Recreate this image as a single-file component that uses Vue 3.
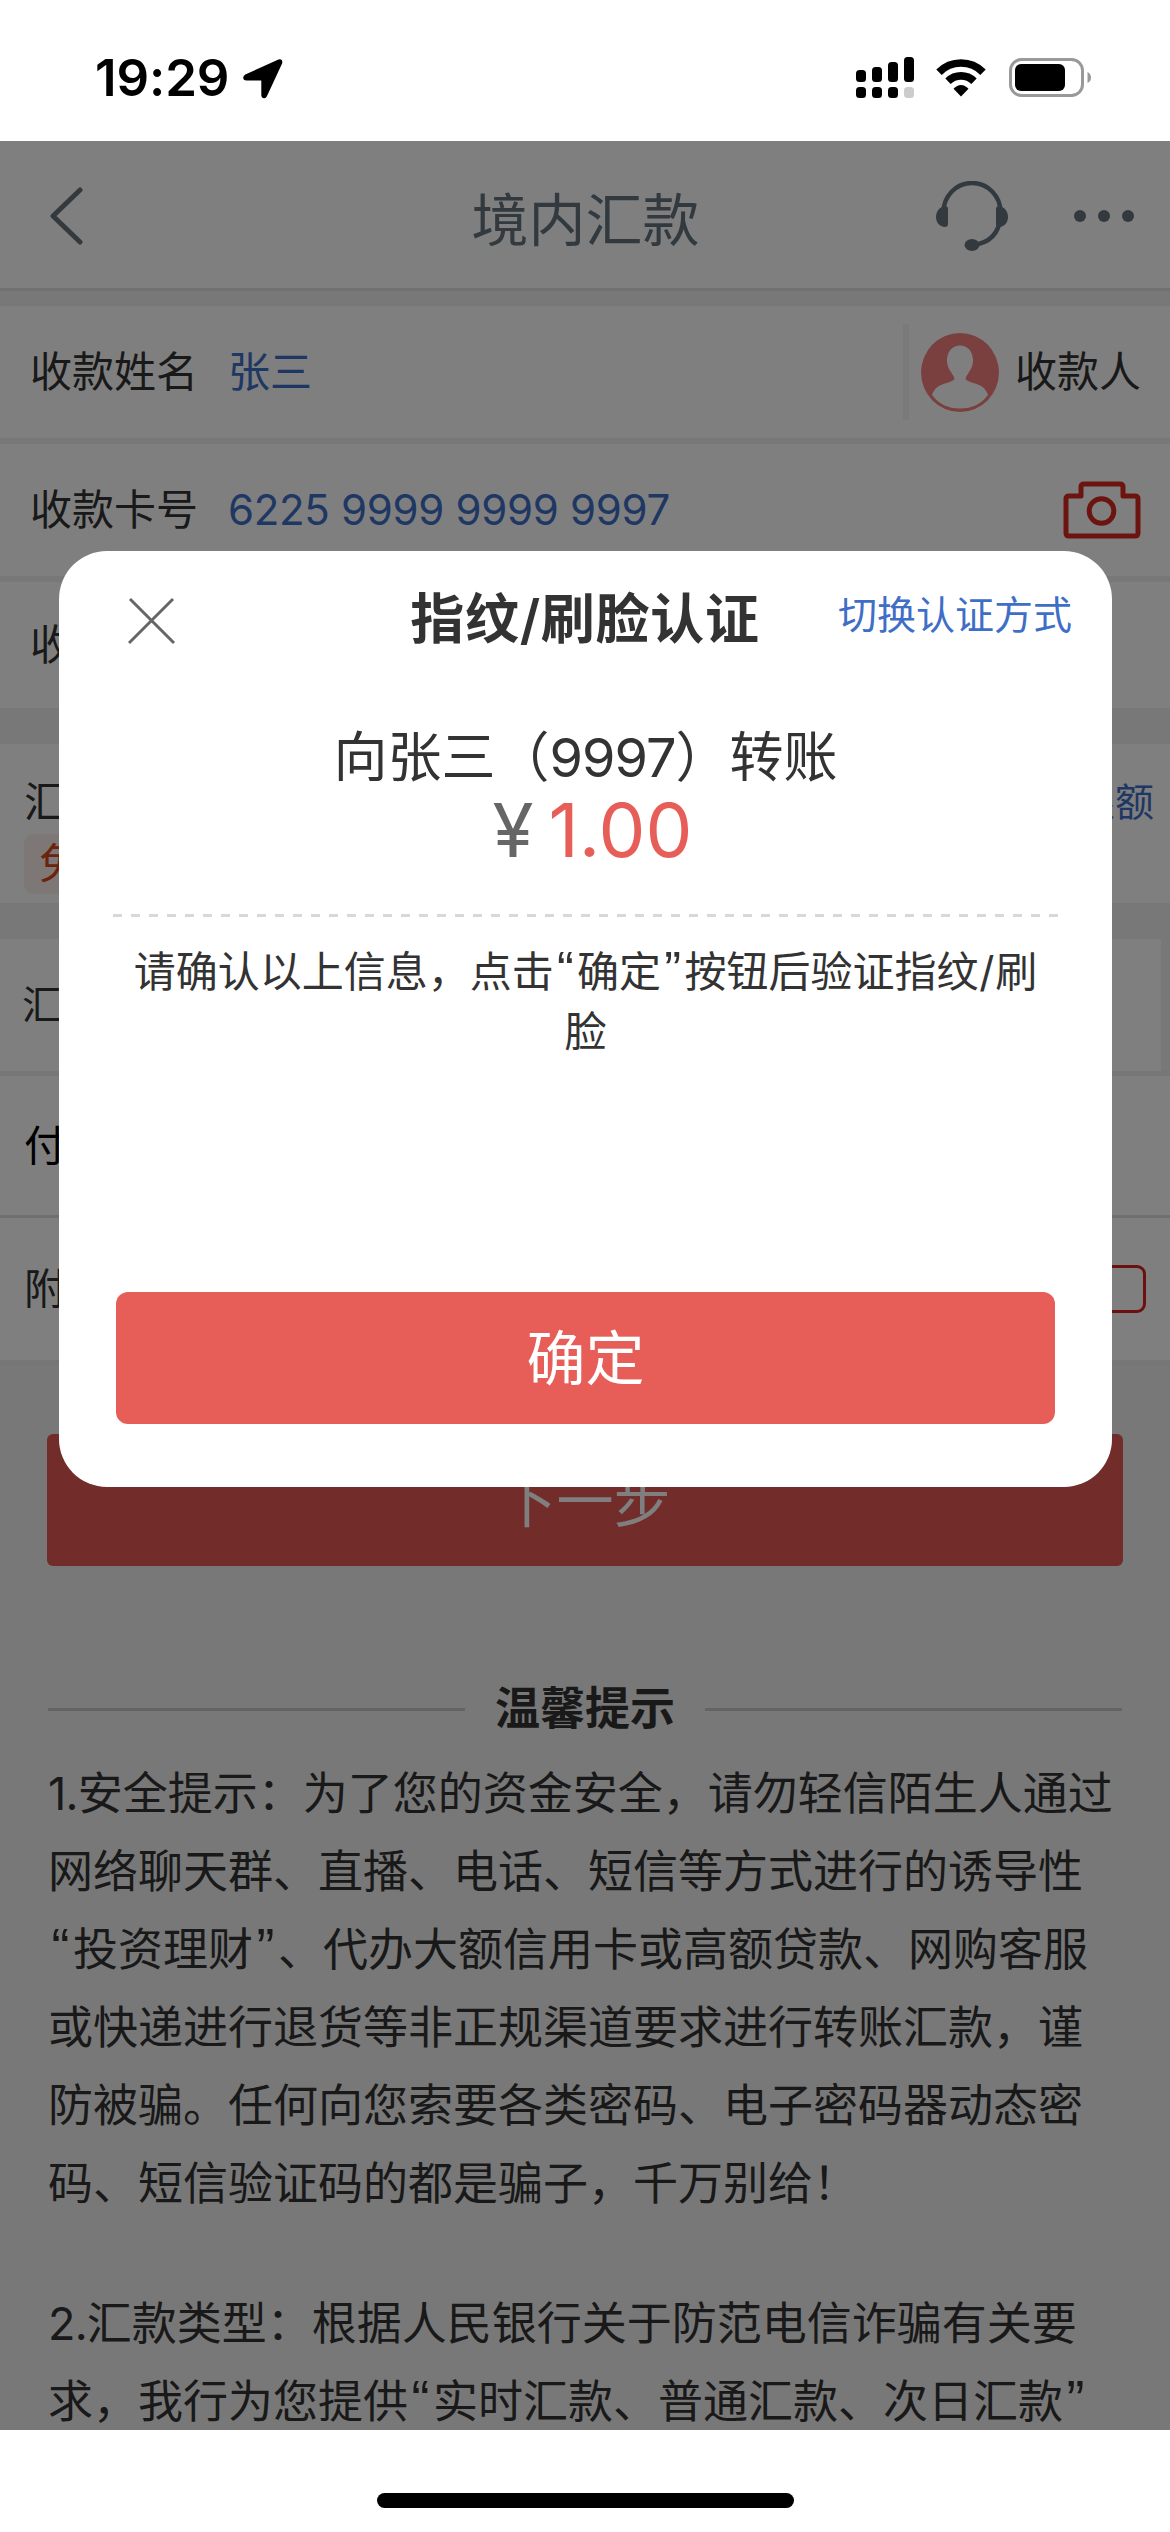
<script setup>
const safetyLines = [
  '1.安全提示：为了您的资金安全，请勿轻信陌生人通过',
  '网络聊天群、直播、电话、短信等方式进行的诱导性',
  '“投资理财”、代办大额信用卡或高额贷款、网购客服',
  '或快递进行退货等非正规渠道要求进行转账汇款，谨',
  '防被骗。任何向您索要各类密码、电子密码器动态密',
  '码、短信验证码的都是骗子，千万别给！',
]
const typeLines = [
  '2.汇款类型：根据人民银行关于防范电信诈骗有关要',
  '求，我行为您提供“实时汇款、普通汇款、次日汇款”',
]
const messageLines = ['请确认以上信息，点击“确定”按钮后验证指纹/刷', '脸']

// Splits a line so that quotes and leading numbers can take their own spacing.
const parts = (line) =>
  line
    .split(/([“”/]|^\d\.)/)
    .filter(Boolean)
    .map((text) => ({
      text,
      kind: /^[“”]$/.test(text) ? 'quote' : text === '/' ? 'slash' : /^\d\.$/.test(text) ? 'num' : '',
    }))

const bars = [
  { x: 0, y: 13 },
  { x: 16, y: 10 },
  { x: 32, y: 5 },
  { x: 48, y: 0 },
]
</script>

<template>
  <div class="screen">
    <div class="status">
      <span class="time">19:29</span>
      <svg class="loc" width="40" height="40" viewBox="0 0 40 40">
        <path d="M35.5 .4 Q40 -.4 39.2 4.2 L24 37 Q23 39.4 21 39.2 Q18.3 39 18.3 36 V21.5 H3.5 Q.6 21.500 .2 19 Q0 16.800 2.300 15.500 Z" />
      </svg>
      <svg class="signal" width="58" height="41" viewBox="0 0 58 41">
        <rect v-for="b in bars" :key="b.x" :x="b.x" :y="b.y" width="10" :height="25 - b.y" rx="3.500" />
        <rect v-for="b in bars" :key="'d' + b.x" :x="b.x" y="30" width="10" height="11" rx="3.500" :fill="b.x === 48 ? '#ccc' : '#000'" />
      </svg>
      <svg class="wifi" width="52" height="38" viewBox="0 0 52 38">
        <path d="M4 13.200 A31 31 0 0 1 48 13.200 M13 22.200 A18.500 18.500 0 0 1 39 22.200" fill="none" stroke="#000" stroke-width="7.600" />
        <path d="M26 37.500 L18.500 29.800 Q22 26 26 26 Q30 26 33.500 29.800 Z" />
      </svg>
      <svg class="battery" width="83" height="40" viewBox="0 0 83 40">
        <rect x="1.500" y="1.500" width="72" height="36" rx="11" fill="none" stroke="#999" stroke-width="3" />
        <rect x="6" y="6" width="50" height="27" rx="6" />
        <path d="M78.500 14 Q82 15.500 82 19.500 Q82 23.500 78.500 25 Z" fill="#999" />
      </svg>
    </div>

    <div class="page">
      <header class="nav">
        <svg class="back" width="34" height="60" viewBox="0 0 34 60">
          <path d="M31 4 L4 30 L31 56" fill="none" stroke="#66757f" stroke-width="5" stroke-linecap="round" stroke-linejoin="round" />
        </svg>
        <h1>境内汇款</h1>
        <svg class="headset" width="72" height="70" viewBox="0 0 72 70">
          <path d="M7.500 28 V31 A28.500 29 0 0 1 64.500 31 V36 Q62 61 37 64" fill="none" stroke="#66757f" stroke-width="4.500" />
          <path d="M12 28 Q12 25 9 25 C-3 27 -3 45 9 46 Q12 46 12 43 Z M60 28 Q60 25 63 25 C75 27 75 45 63 46 Q60 46 60 43 Z" fill="#66757f" />
          <ellipse cx="36" cy="64" rx="7.500" ry="6" fill="#66757f" />
        </svg>
        <svg class="more" width="60" height="12" viewBox="0 0 60 12" fill="#66757f">
          <circle cx="6" cy="6" r="6" /><circle cx="30" cy="6" r="6" /><circle cx="54" cy="6" r="6" />
        </svg>
      </header>

      <section class="form">
        <div class="row line">
          <span class="label">收款姓名</span>
          <span class="value">张三</span>
          <div class="payee">
            <svg width="78" height="79" viewBox="0 0 78 79">
              <ellipse cx="39" cy="39.500" rx="39" ry="39.500" fill="#f48180" />
              <path d="M39 12.500 C47 12.500 52 19 52 27.500 C52 34 49 37 47.500 40 Q45 43 44.500 46 Q46 48 52 50 C61 52 65 56 67 62 Q57 75.500 39 75.500 Q21 75.500 11 62 C13 56 17 52 26 50 Q32 48 33.500 46 Q33 43 30.500 40 C29 37 26 34 26 27.500 C26 19 31 12.500 39 12.500 Z" fill="#fff" />
            </svg>
            <span>收款人</span>
          </div>
        </div>
        <div class="row line">
          <span class="label">收款卡号</span>
          <span class="value card">6225 9999 9999 9997</span>
          <svg class="camera" width="78" height="58" viewBox="0 0 78 58" fill="none" stroke="#d82a20" stroke-width="5">
            <path d="M6 15 H18 V6 Q18 3 21 3 H57 Q60 3 60 6 V15 H72 Q75 15 75 18 V52 Q75 55 72 55 H6 Q3 55 3 52 V18 Q3 15 6 15 Z" stroke-linejoin="round" />
            <circle cx="38.500" cy="30" r="12.300" />
          </svg>
        </div>
        <div class="row third"><span class="label">收款银行</span></div>
      </section>

      <section class="form amount-block">
        <div class="amount-row">
          <span>汇款金额</span>
          <span class="limit">查看限额</span>
        </div>
        <div class="badge">免手续费</div>
      </section>

      <div class="type-block"><span>汇款方式</span></div>
      <div class="row pay"><span>付款卡号</span></div>
      <div class="row note">
        <span>附言</span>
        <i class="note-box"></i>
      </div>

      <div class="next">下一步</div>

      <div class="tips-title"><i></i><b>温馨提示</b><i></i></div>
      <div class="tips">
        <p v-for="(lines, n) in [safetyLines, typeLines]" :key="n">
          <span v-for="l in lines" :key="l" class="text-line"><span v-for="(p, i) in parts(l)" :key="i" :class="p.kind">{{ p.text }}</span></span>
        </p>
      </div>

      <div class="mask">
        <div class="dialog">
          <div class="dialog-head">
            <svg class="close" width="48" height="48" viewBox="0 0 48 48">
              <path d="M2 2 L46 46 M45 2 L1 46" stroke="#666" stroke-width="3" />
            </svg>
            <h2>指纹/刷脸认证</h2>
            <span class="switch">切换认证方式</span>
          </div>
          <div class="to">向张三（<span>9997</span>）转账</div>
          <div class="money"><span class="yen">¥</span><span class="sum">1.00</span></div>
          <div class="dash"></div>
          <div class="msg">
            <span v-for="l in messageLines" :key="l" class="text-line"><span v-for="(p, i) in parts(l)" :key="i" :class="p.kind">{{ p.text }}</span></span>
          </div>
          <div class="ok">确定</div>
        </div>
      </div>
    </div>

    <div class="home"><i></i></div>
  </div>
</template>

<style>
body {
  margin: 0;
  background: #fff;
}
</style>

<style scoped>
.screen {
  width: 1170px;
  height: 2532px;
  overflow: hidden;
  display: flex;
  flex-direction: column;
  background: #fff;
  color: #333;
  font-family: Inter, "Noto Sans CJK SC", sans-serif;
  font-size: 42px;
  line-height: 60px;
  white-space: nowrap;
}
.screen * {
  box-sizing: border-box;
}
svg {
  display: block;
  flex: none;
}
.status {
  height: 141px;
  flex: none;
  display: flex;
  align-items: flex-start;
  padding-top: 57px;
}
.time {
  width: 147px;
  margin-left: 95px;
  margin-top: -9px;
  font-size: 51px;
  font-weight: 600;
  letter-spacing: -0.1px;
  color: #000;
}
.loc {
  margin: 2px 0 0 1px;
}
.signal {
  margin-left: 573px;
}
.wifi {
  margin: 2px 0 0 21px;
}
.battery {
  margin: 1px 0 0 22px;
}
.page {
  height: 2289px;
  flex: none;
  position: relative;
  overflow: hidden;
  background: #f1f1f1;
}
.nav {
  height: 150px;
  display: flex;
  align-items: center;
  background: #fff;
  border-bottom: 3px solid #e2e2e2;
  padding: 0 36px 0 49px;
  color: #66757f;
}
.back {
  margin-top: 3px;
}
h1 {
  width: 853px;
  margin: 12px 0 0;
  padding-left: 152px;
  flex: none;
  text-align: center;
  font-size: 57px;
  font-weight: 400;
  line-height: 80px;
}
.headset {
  margin-top: 2px;
}
.more {
  margin: 3px 0 0 auto;
}
.form {
  margin-top: 15px;
  background: #fff;
}
.row {
  height: 132px;
  display: flex;
  align-items: center;
  padding-left: 30px;
  background: #fff;
}
.line {
  height: 138px;
  border-bottom: 6px solid #f1f1f1;
}
.third {
  height: 126px;
}
.label {
  width: 198px;
}
.value {
  color: #3f6ec6;
}
.card {
  letter-spacing: -0.3px;
}
.payee {
  margin-left: auto;
  height: 96px;
  width: 267px;
  border-left: 6px solid #f4f4f4;
  padding-left: 12px;
  display: flex;
  align-items: center;
  gap: 16px;
}
.camera {
  margin: 0 29px 0 auto;
}
.amount-block {
  margin-top: 36px;
  height: 159px;
  padding: 28px 16px 0 24px;
}
.amount-row {
  display: flex;
  justify-content: space-between;
}
.limit {
  color: #3f6ec6;
  font-size: 39px;
}
.badge {
  width: 210px;
  height: 60px;
  margin-top: 2px;
  border-radius: 9px;
  background: #fbeeeb;
  color: #da441d;
  padding-left: 15px;
}
.type-block {
  margin-top: 36px;
  width: 1161px;
  height: 132px;
  background: #fff;
  padding-left: 22px;
  line-height: 132px;
  font-size: 39.500px;
}
.pay {
  height: 147px;
  border-top: 5px solid #efefef;
  border-bottom: 3px solid #dfdfdf;
  padding-left: 24px;
  color: #000;
}
.note {
  height: 147px;
  border-bottom: 5px solid #ededed;
  padding: 0 24px;
}
.note-box {
  width: 100px;
  height: 48px;
  margin-left: auto;
  border: 3px solid #d62420;
  border-radius: 9px;
}
.next {
  width: 1076px;
  height: 132px;
  margin: 69px 0 0 47px;
  border-radius: 6px;
  background: #e45853;
  color: #fff;
  font-size: 57px;
  line-height: 135px;
  text-align: center;
}
.tips-title {
  display: flex;
  align-items: center;
  justify-content: space-between;
  height: 74px;
  margin: 106px 48px 0;
}
.tips-title i {
  width: 417px;
  height: 3px;
  background: #c8c8c8;
}
.tips-title b {
  font-size: 45px;
  font-weight: 600;
  line-height: 62px;
}
.tips {
  margin: 9px 0 0 48px;
  font-size: 45px;
  line-height: 78px;
}
.tips p {
  margin: 0 0 62px;
}
.text-line {
  display: block;
}
.num {
  letter-spacing: -0.8px;
}
.slash {
  padding: 0 0.02em;
}
.quote {
  font-family: "Liberation Sans", sans-serif;
  font-size: 1.2em;
  line-height: 0;
  padding: 0 0.065em;
}
.mask {
  position: absolute;
  inset: 0;
  background: rgba(0, 0, 0, 0.5);
}
.dialog {
  position: absolute;
  left: 59px;
  top: 410px;
  width: 1053px;
  height: 936px;
  border-radius: 48px;
  background: #fff;
  padding: 27px 54px 0;
}
.dialog-head {
  display: flex;
  align-items: center;
  height: 80px;
}
.close {
  margin: 5px 0 0 15px;
}
h2 {
  margin: 4px 0 0;
  width: 658px;
  flex: none;
  text-align: center;
  padding-left: 160px;
  font-size: 54px;
  font-weight: 600;
  letter-spacing: 0.7px;
}
.switch {
  margin: -6px 0 0 4px;
  font-size: 39px;
  color: #3f6ec6;
}
.to {
  margin-top: 60px;
  font-size: 54px;
  line-height: 80px;
  text-align: center;
}
.to span {
  letter-spacing: -1px;
}
.money {
  display: flex;
  align-items: center;
  justify-content: center;
  height: 80px;
  margin: -8px 0 0 14px;
  font-size: 74.500px;
  line-height: 80px;
  color: #e75e58;
}
.yen {
  color: #666;
  margin-right: 15px;
}
.dash {
  height: 3px;
  margin-top: 44px;
  background: repeating-linear-gradient(90deg, #d8d8d8 0 9px, transparent 9px 18px);
}
.msg {
  margin-top: 25px;
  text-align: center;
}
.ok {
  width: 939px;
  height: 132px;
  margin: 230px 0 0 3px;
  border-radius: 12px;
  background: #e75e58;
  color: #fff;
  font-size: 59px;
  line-height: 134px;
  text-align: center;
}
.home {
  flex: 1;
  display: flex;
  justify-content: center;
  padding-top: 63px;
}
.home i {
  width: 417px;
  height: 15px;
  border-radius: 8px;
  background: #000;
}
</style>
